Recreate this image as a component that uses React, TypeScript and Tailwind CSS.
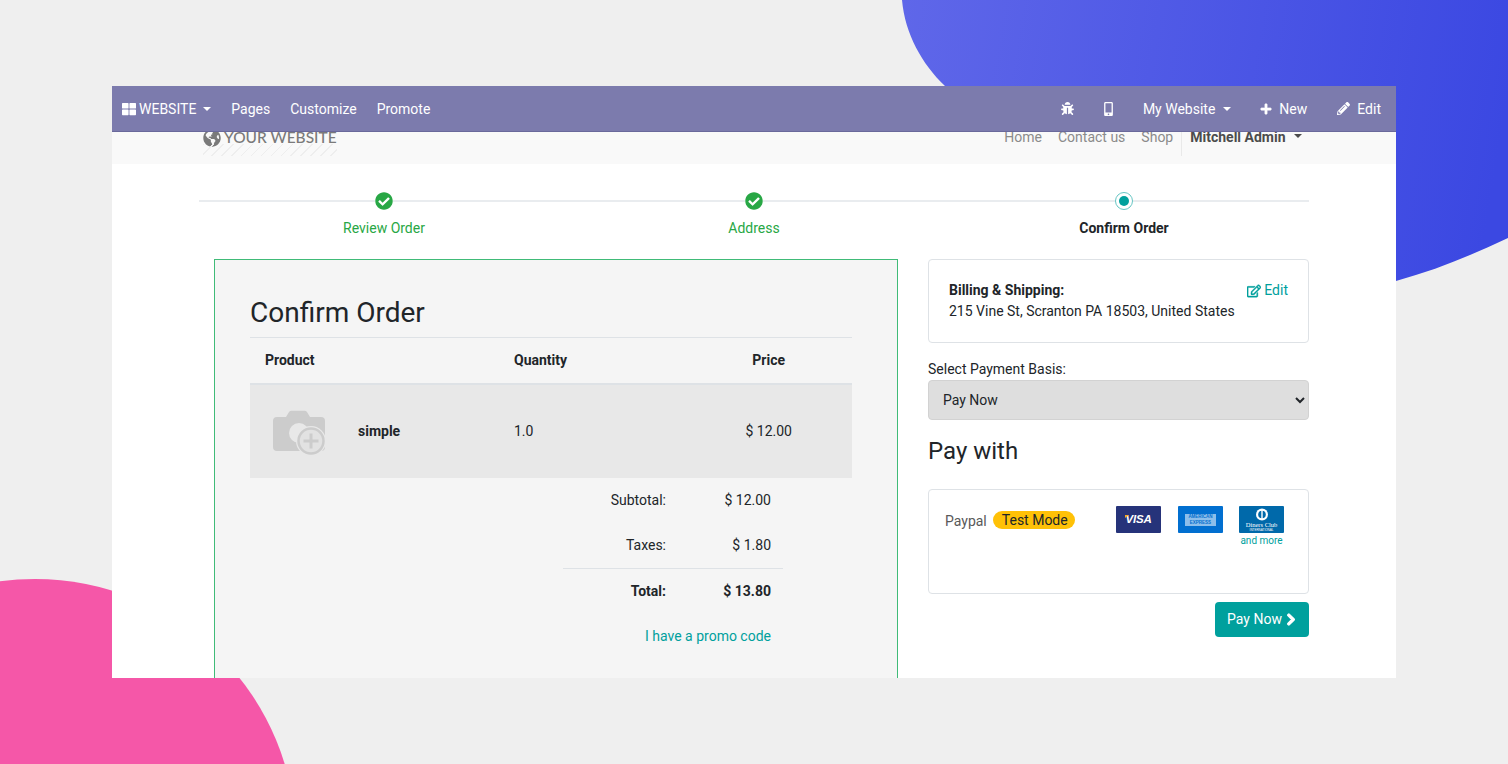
import React from 'react';
import {
  FaBug,
  FaCheckCircle,
  FaChevronRight,
  FaGlobeAmericas,
  FaMobileAlt,
  FaPencilAlt,
  FaPlus,
  FaRegEdit,
  FaThLarge,
} from 'react-icons/fa';

function Caret({ className = '' }: { className?: string }) {
  return (
    <span
      className={`inline-block w-0 h-0 border-x-[4.2px] border-x-transparent border-t-[4.2px] border-t-current ${className}`}
    />
  );
}

function TopBar() {
  return (
    <div className="relative z-10 h-[46px] shrink-0 flex items-center justify-between bg-[#7c7bad] border-b border-[#6a699b] text-white text-[14px]">
      <div className="flex items-center pl-[10px]">
        <FaThLarge className="w-[14px] h-[14px]" />
        <span className="ml-[3px] mt-[2px]">WEBSITE</span>
        <Caret className="ml-[7px]" />
        <span className="ml-[20px] mt-[2px]">Pages</span>
        <span className="ml-[20px] mt-[2px]">Customize</span>
        <span className="ml-[20px] mt-[2px]">Promote</span>
      </div>
      <div className="flex items-center pr-[15px]">
        <FaBug className="w-[13px] h-[13px]" />
        <FaMobileAlt className="ml-[28px] w-[13px] h-[14px]" />
        <span className="ml-[28px] mt-[2px]">My Website</span>
        <Caret className="ml-[8px]" />
        <FaPlus className="ml-[29px] w-[12px] h-[12px] stroke-current stroke-[24]" />
        <span className="ml-[7px] mt-[2px]">New</span>
        <FaPencilAlt className="ml-[30px] w-[13px] h-[13px]" />
        <span className="ml-[7px] mt-[2px]">Edit</span>
      </div>
    </div>
  );
}

function SiteHeader() {
  return (
    <div className="h-[32px] shrink-0 bg-[#f9f9f9] flex justify-between pl-[91px] pr-[94.500px]">
      <div className="relative h-[24px] flex items-start">
        <div className="-mt-[3px] flex items-center h-[18px] text-[#7a7a7a]">
          <FaGlobeAmericas className="w-[18px] h-[18px]" />
          <span className="ml-[3px] mt-[-3px] text-[15.500px] leading-[10px] font-['Lato',sans-serif] font-medium">YOUR WEBSITE</span>
        </div>
        <div className="absolute left-0 right-0 top-[12px] h-[12px] bg-[repeating-linear-gradient(135deg,#eeeeee_0,#eeeeee_1px,transparent_1px,transparent_7px)]" />
      </div>
      <div className="flex items-start text-[14px] leading-[10px] text-[#8b8b8b] h-[24px]">
        <span>Home</span>
        <span className="ml-[16px]">Contact us</span>
        <span className="ml-[16px]">Shop</span>
        <div className="ml-[8px] w-px h-[24px] bg-[#e9e9e9]" />
        <span className="ml-[8px] font-bold text-[#4c4c4c]">Mitchell Admin</span>
        <Caret className="mt-[2px] ml-[8px] text-[#4c4c4c]" />
      </div>
    </div>
  );
}

function Step({ label, state }: { label: string; state: 'done' | 'current' }) {
  return (
    <div className="flex-1 flex flex-col items-center">
      {state === 'done' ? (
        <div className="relative z-10 w-[18px] h-[18px] rounded-full bg-white flex items-center justify-center">
          <FaCheckCircle className="w-[18px] h-[18px] text-[#28a745]" />
        </div>
      ) : (
        <div className="relative z-10 w-[18px] h-[18px] rounded-full bg-white border border-[#66c6c4] flex items-center justify-center">
          <div className="w-[10px] h-[10px] rounded-full bg-[#00a09d]" />
        </div>
      )}
      <div className={`mt-[8px] text-[14px] leading-[21px] ${state === 'done' ? 'text-[#28a745]' : 'font-bold text-[#212529]'}`}>
        {label}
      </div>
    </div>
  );
}

function Stepper() {
  return (
    <div className="relative mx-[87px] w-[1110px] mt-[28px] flex">
      <div className="absolute left-0 right-0 top-[8px] h-[2px] bg-[#e9ecef]" />
      <Step label="Review Order" state="done" />
      <Step label="Address" state="done" />
      <Step label="Confirm Order" state="current" />
    </div>
  );
}

function CameraPlaceholder() {
  return (
    <svg width="56" height="48" viewBox="0 0 56 48">
      <path
        d="M17 3a3 3 0 0 1 2.500-1.300h13A3 3 0 0 1 35 3l3 5h11a4 4 0 0 1 4 4v26a4 4 0 0 1-4 4H5a4 4 0 0 1-4-4V12a4 4 0 0 1 4-4h9z"
        fill="#cccccc"
      />
      <circle cx="27" cy="24" r="10" fill="#e8e8e8" />
      <circle cx="39" cy="32" r="15" fill="#e8e8e8" />
      <circle cx="39" cy="32" r="12.500" fill="#e2e2e2" stroke="#cccccc" strokeWidth="2.500" />
      <path d="M39 24.500v15M31.500 32h15" stroke="#cccccc" strokeWidth="3" />
    </svg>
  );
}

function OrderCard() {
  return (
    <div className="w-[684px] h-[460px] shrink-0 border border-[#40bb78] bg-[#f5f5f5] pl-[35px] pr-[45px] pt-[36px] text-[14px] text-[#212529]">
      <h1 className="text-[28px] leading-[34px] font-normal">Confirm Order</h1>
      <div className="mt-[7px] border-t border-[#dee2e6] border-b-2 border-b-[#dee2e6] h-[48px] flex items-center font-bold">
        <div className="w-[264px] pl-[15px]">Product</div>
        <div className="w-[150px]">Quantity</div>
        <div className="w-[121px] text-right">Price</div>
      </div>
      <div className="h-[93px] bg-[#e8e8e8] flex items-center">
        <div className="w-[108px] pl-[22px] pt-[2px]">
          <CameraPlaceholder />
        </div>
        <div className="w-[156px] font-bold">simple</div>
        <div className="w-[150px]">1.0</div>
        <div className="w-[128px] text-right">$ 12.00</div>
      </div>
      <div className="ml-[313px] w-[220px] mt-[12px]">
        <div className="flex h-[21px] items-center justify-end pr-[12px]">
          <span className="w-[103px] text-right">Subtotal:</span>
          <span className="w-[105px] text-right">$ 12.00</span>
        </div>
        <div className="flex h-[21px] mt-[24px] items-center justify-end pr-[12px]">
          <span className="w-[103px] text-right">Taxes:</span>
          <span className="w-[105px] text-right">$ 1.80</span>
        </div>
        <div className="border-t border-[#dee2e6] mt-[12px]" />
        <div className="flex h-[21px] mt-[12px] items-center justify-end pr-[12px] font-bold">
          <span className="w-[103px] text-right">Total:</span>
          <span className="w-[105px] text-right">$ 13.80</span>
        </div>
        <div className="mt-[24px] pr-[12px] h-[21px] text-right text-[#00a09d]">I have a promo code</div>
      </div>
    </div>
  );
}

function CardLogo({ className, children }: { className: string; children: React.ReactNode }) {
  return (
    <div className={`relative w-[45px] h-[27px] rounded-[1px] flex flex-col items-center justify-center overflow-hidden text-white ${className}`}>
      {children}
    </div>
  );
}

function PaymentCards() {
  return (
    <div className="flex gap-[16px] items-start">
      <CardLogo className="bg-[#26337a] mr-px">
        <span className="text-[11.500px] leading-none font-bold italic font-['Liberation_Sans',sans-serif] tracking-[-0.2px]">VISA</span>
        <span className="absolute left-[9px] top-[9px] w-0 h-0 border-t-[3px] border-t-[#f7a823] border-r-[4px] border-r-transparent" />
      </CardLogo>
      <CardLogo className="bg-[#016fd0]">
        <span className="w-[31px] text-center bg-white/55 text-[#016fd0] text-[4.500px] leading-[6px] font-bold font-['Liberation_Sans',sans-serif]">AMERICAN</span>
        <span className="w-[31px] text-center bg-white/55 text-[#016fd0] text-[4.500px] leading-[6px] font-bold font-['Liberation_Sans',sans-serif]">EXPRESS</span>
      </CardLogo>
      <div className="flex flex-col items-center">
        <CardLogo className="bg-[#0069aa]">
          <svg width="14" height="13" viewBox="0 0 14 13">
            <circle cx="7" cy="6.500" r="6" fill="#ffffff" />
            <circle cx="7" cy="6.500" r="3.800" fill="#0069aa" />
            <rect x="6.300" y="1" width="1.400" height="11" fill="#ffffff" />
          </svg>
          <span className="text-[6.500px] leading-[7px] font-['Liberation_Serif',serif] whitespace-nowrap">Diners Club</span>
          <span className="text-[3px] leading-[4px] font-['Liberation_Sans',sans-serif] whitespace-nowrap">INTERNATIONAL</span>
        </CardLogo>
        <span className="mt-[1px] text-[10px] leading-[14px] text-[#00a09d]">and more</span>
      </div>
    </div>
  );
}

function SidePanel() {
  return (
    <div className="w-[381px] shrink-0 ml-[30px] text-[14px] text-[#212529]">
      <div className="h-[84px] border border-[#dee2e6] rounded-[4px] bg-white pl-[20px] pr-[20px] pt-[20px] leading-[21px] flex justify-between">
        <div>
          <div className="font-bold">Billing &amp; Shipping:</div>
          <div>215 Vine St, Scranton PA 18503, United States</div>
        </div>
        <div className="flex items-start text-[#00a09d]">
          <span className="flex items-center h-[21px]">
            <FaRegEdit className="w-[14px] h-[14px] stroke-current stroke-[16]" />
            <span className="ml-[3px]">Edit</span>
          </span>
        </div>
      </div>
      <div className="mt-[16px] leading-[21px] h-[21px]">Select Payment Basis:</div>
      <select
        defaultValue="now"
        className="block w-full h-[40px] bg-[#dedede] border border-[#d2d2d2] rounded-[4px] pl-[10px] text-[14px] text-[#212529] outline-none"
      >
        <option value="now">Pay Now</option>
      </select>
      <h3 className="mt-[15px] text-[24px] leading-[32px] font-normal">Pay with</h3>
      <div className="mt-[22px] h-[105px] border border-[#dee2e6] rounded-[4px] bg-white pl-[16px] pr-[24px] pt-[16px] flex justify-between">
        <div className="flex items-center h-[28px] self-start">
          <span className="mt-[2px] text-[#595959]">Paypal</span>
          <span className="ml-[6px] h-[18px] pl-[9px] pr-[7px] leading-[18px] rounded-full bg-[#ffc107] text-[#212529]">Test Mode</span>
        </div>
        <PaymentCards />
      </div>
      <div className="mt-[8px] flex justify-end">
        <button className="h-[35px] w-[94px] rounded-[4px] bg-[#00a09d] text-white flex items-center justify-center">
          Pay Now
          <FaChevronRight className="ml-[3px] w-[12px] h-[13px] stroke-current stroke-[50]" />
        </button>
      </div>
    </div>
  );
}

function BlueShape() {
  return (
    <svg className="absolute left-0 top-0" width="1508" height="764" viewBox="0 0 1508 764">
      <defs>
        <linearGradient id="blob" x1="902" y1="0" x2="1508" y2="100" gradientUnits="userSpaceOnUse">
          <stop offset="0" stopColor="#5f67e9" />
          <stop offset="1" stopColor="#3b48e2" />
        </linearGradient>
      </defs>
      <path
        d="M902 0C905 34 922 64 945 86C1060 200 1230 281 1396 281C1436 270 1472 255 1508 238V0Z"
        fill="url(#blob)"
      />
    </svg>
  );
}

export default function App() {
  return (
    <div className="relative w-[1508px] h-[764px] overflow-hidden bg-[#efefef] font-['Roboto',sans-serif]">
      <BlueShape />
      <div className="absolute left-[-226px] top-[579px] w-[522px] h-[522px] rounded-full bg-[#f557a8]" />
      <div className="absolute left-[112px] top-[86px] w-[1284px] h-[592px] bg-white overflow-hidden flex flex-col">
        <TopBar />
        <SiteHeader />
        <Stepper />
        <div className="mt-[20px] pl-[102px] flex items-start">
          <OrderCard />
          <SidePanel />
        </div>
      </div>
    </div>
  );
}
